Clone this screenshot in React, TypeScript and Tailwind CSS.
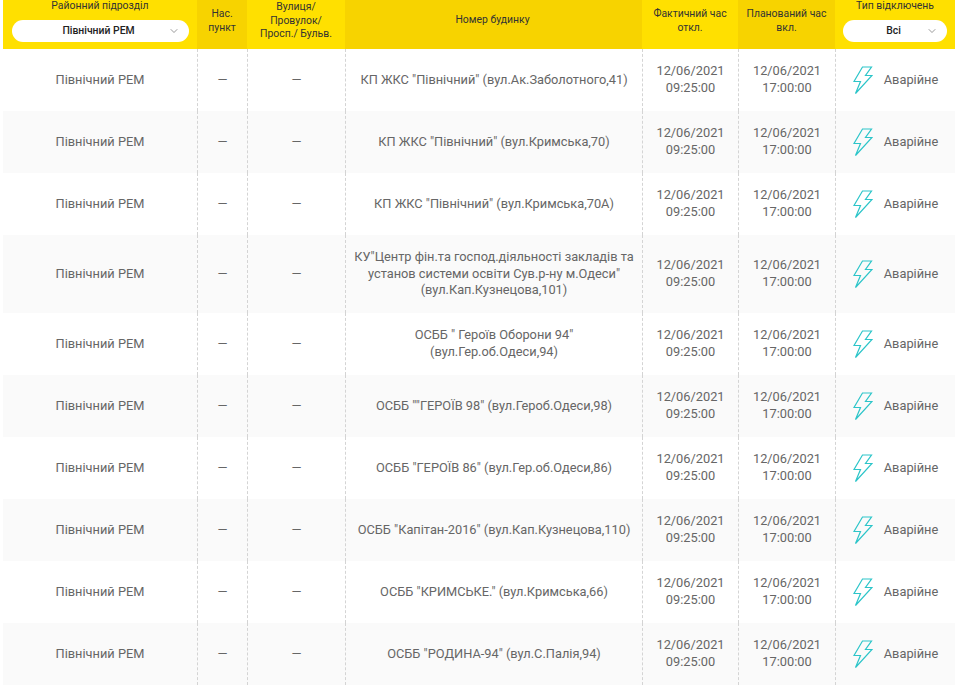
import { ChevronDown } from "lucide-react";

const rows = [
  ['КП ЖКС "Північний" (вул.Ак.Заболотного,41)'],
  ['КП ЖКС "Північний" (вул.Кримська,70)'],
  ['КП ЖКС "Північний" (вул.Кримська,70А)'],
  ['КУ"Центр фін.та господ.діяльності закладів та', "установ системи освіти Сув.р-ну м.Одеси\"", "(вул.Кап.Кузнецова,101)"],
  ['ОСББ " Героїв Оборони 94"', "(вул.Гер.об.Одеси,94)"],
  ['ОСББ ""ГЕРОЇВ 98" (вул.Героб.Одеси,98)'],
  ['ОСББ "ГЕРОЇВ 86" (вул.Гер.об.Одеси,86)'],
  ['ОСББ "Капітан-2016" (вул.Кап.Кузнецова,110)'],
  ['ОСББ "КРИМСЬКЕ." (вул.Кримська,66)'],
  ['ОСББ "РОДИНА-94" (вул.С.Палія,94)'],
];

const grid = "grid grid-cols-[194px_50px_98px_297px_96px_97px_120px]";
const cell = "flex items-center justify-center text-center border-l border-dashed border-[#d4d4d4]";

function Bolt() {
  return (
    <svg width="20" height="29" viewBox="0 0 20 29" fill="none" stroke="#2cc5c9" strokeWidth="1.2" className="shrink-0">
      <path d="M9.5 1 H18.5 L12.5 9.5 H19 L2.5 27.5 L7.5 15.5 H1 Z" />
    </svg>
  );
}

function Filter({ label, className }: { label: string; className: string }) {
  return (
    <div className={`relative flex h-[22px] items-center justify-center rounded-full bg-white pr-[3px] text-[10.4px] font-medium text-[#222] ${className}`}>
      {label}
      <ChevronDown size={12} strokeWidth={1.2} className="absolute right-[9px] top-[5px] text-[#555]" />
    </div>
  );
}

export default function App() {
  return (
    <div className="h-[687px] overflow-hidden bg-white pl-[3px] font-['Roboto',sans-serif]">
      <div className={`${grid} h-[49px] text-[10.4px] leading-[13.5px] text-[#333]`}>
        <div className="flex flex-col items-center bg-[#ffe000]">
          <div className="mt-[-2px] h-[20px] pt-[1px]">Районний підрозділ</div>
          <Filter label="Північний РЕМ" className="mt-[2px] w-[177px]" />
        </div>
        <div className="flex items-center justify-center bg-[#f7d300] pb-[8px] text-center">
          <span>Нас.<br />пункт</span>
        </div>
        <div className="flex items-center justify-center bg-[#ffe000] pb-[8px] text-center">
          <span>Вулиця/<br />Провулок/<br />Просп./ Бульв.</span>
        </div>
        <div className="flex items-center justify-center bg-[#f7d300] pb-[9px] pr-[2px]">Номер будинку</div>
        <div className="flex items-center justify-center bg-[#ffe000] pb-[8px] text-center">
          <span>Фактичний час<br />откл.</span>
        </div>
        <div className="flex items-center justify-center bg-[#f7d300] pb-[8px] text-center">
          <span>Планований час<br />вкл.</span>
        </div>
        <div className="flex flex-col items-center bg-[#ffe000]">
          <div className="mt-[-2px] h-[20px] pt-[1px]">Тип відключень</div>
          <Filter label="Всі" className="mt-[2px] w-[104px]" />
        </div>
      </div>
      {rows.map((lines, i) => (
        <div
          key={i}
          className={`${grid} text-[12.8px] leading-[16.64px] text-[#666] ${lines.length === 3 ? "h-[78px]" : "h-[62px]"} ${i % 2 === 1 ? "bg-[#fafafa]" : "bg-white"}`}
        >
          <div className="flex items-center justify-center">Північний РЕМ</div>
          <div className={cell}>—</div>
          <div className={cell}>—</div>
          <div className={cell}>
            <div>
              {lines.map((line) => (
                <div key={line}>{line}</div>
              ))}
            </div>
          </div>
          <div className={cell}>
            <span>12/06/2021<br />09:25:00</span>
          </div>
          <div className={cell}>
            <span>12/06/2021<br />17:00:00</span>
          </div>
          <div className={`${cell} gap-[11px]`}>
            <Bolt />
            <span>Аварійне</span>
          </div>
        </div>
      ))}
    </div>
  );
}
